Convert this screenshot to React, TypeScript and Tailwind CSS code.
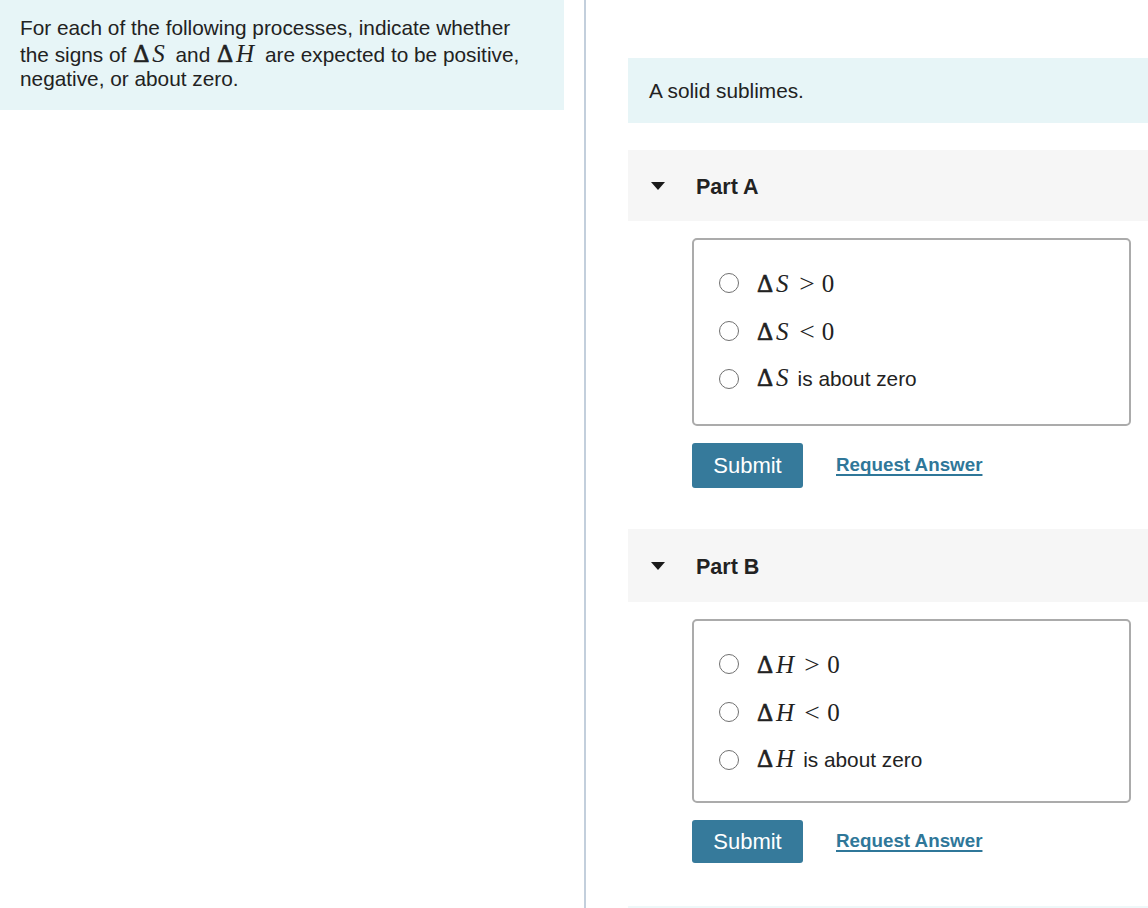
import { ReactNode } from "react"

const Delta = ({ v, size = "opt" }: { v: string; size?: "opt" | "inline" }) => (
    <span
        className={
            size === "opt"
                ? "font-['Liberation_Serif',serif] text-[25px] leading-none"
                : "font-['Liberation_Serif',serif] text-[25px] leading-none ml-[1px] mr-[5px]"
        }
    >
        <span className="[-webkit-text-stroke:0.6px_#222] mr-[3px]">Δ</span>
        <span className="italic">{v}</span>
    </span>
)

const Rel = ({ op, n }: { op: string; n: string }) => (
    <span className="font-['Liberation_Serif',serif] text-[25px] leading-none">
        <span className="inline-block ml-[11px] mr-[8px] scale-x-110">{op}</span>
        {n}
    </span>
)

const Option = ({ children }: { children: ReactNode }) => (
    <label className="flex items-center h-[48px] gap-[18px]">
        <span className="w-[20px] h-[20px] rounded-full border-[1.5px] border-[#707070] bg-white shrink-0" />
        <span className="flex items-baseline">{children}</span>
    </label>
)

type PartProps = {
    title: string
    options: ReactNode[]
    headerH: string
    boxPad: string
    btnH: string
}

const Part = ({ title, options, headerH, boxPad, btnH }: PartProps) => (
    <div className="flex flex-col">
        <div className={`${headerH} bg-[#f6f6f6] flex items-center pl-[22px]`}>
            <svg width="16" height="10" viewBox="0 0 16 10" className="mt-[1px]">
                <path d="M1 1 L15 1 L8 9 Z" fill="#1a1a1a" />
            </svg>
            <span className="ml-[30px] mt-[3px] text-[21.5px] font-bold text-[#222]">{title}</span>
        </div>
        <div className="pl-[64px] pr-[17px] pt-[17px]">
            <div className={`border-2 border-[#ababab] rounded-[5px] pl-[25px] ${boxPad}`}>
                {options.map((o, i) => (
                    <Option key={i}>{o}</Option>
                ))}
            </div>
            <div className="flex items-center mt-[17px] gap-[33px]">
                <button className={`${btnH} w-[111px] bg-[#367a9b] rounded-[3px] text-white text-[22px]`}>
                    Submit
                </button>
                <a href="#" className="text-[#2f7799] font-bold text-[18.8px] underline underline-offset-[3px] decoration-2">
                    Request Answer
                </a>
            </div>
        </div>
    </div>
)

const App = () => {
    return (
        <div className="flex min-h-[908px] bg-white font-['Liberation_Sans',Arial,sans-serif] text-[#222]">
            <div className="w-[584px] shrink-0">
                <div className="w-[564px] h-[110px] bg-[#e7f5f7] pl-[20px] pt-[16px] text-[20.8px] leading-[24.5px]">
                    <div>For each of the following processes, indicate whether</div>
                    <div className="whitespace-nowrap">
                        the signs of <Delta v="S" size="inline" /> and <Delta v="H" size="inline" /> are expected to be positive,
                    </div>
                    <div>negative, or about zero.</div>
                </div>
            </div>
            <div className="w-[2px] bg-[#c3cfdc] shrink-0" />
            <div className="flex-1 pl-[42px] pt-[58px]">
                <div className="h-[65px] bg-[#e7f5f7] flex items-center pl-[21px] text-[20.8px]">
                    A solid sublimes.
                </div>
                <div className="mt-[27px]">
                    <Part
                        title="Part A"
                        headerH="h-[71px]"
                        boxPad="pt-[19px] pb-[21px]"
                        btnH="h-[45px]"
                        options={[
                            <>
                                <Delta v="S" />
                                <Rel op=">" n="0" />
                            </>,
                            <>
                                <Delta v="S" />
                                <Rel op="<" n="0" />
                            </>,
                            <>
                                <Delta v="S" />
                                <span className="ml-[9px] text-[20.8px]">is about zero</span>
                            </>,
                        ]}
                    />
                </div>
                <div className="mt-[41px]">
                    <Part
                        title="Part B"
                        headerH="h-[73px]"
                        boxPad="pt-[19px] pb-[17px]"
                        btnH="h-[43px]"
                        options={[
                            <>
                                <Delta v="H" />
                                <Rel op=">" n="0" />
                            </>,
                            <>
                                <Delta v="H" />
                                <Rel op="<" n="0" />
                            </>,
                            <>
                                <Delta v="H" />
                                <span className="ml-[9px] text-[20.8px]">is about zero</span>
                            </>,
                        ]}
                    />
                </div>
                <div className="mt-[43px] h-[40px] bg-[#eef8f9]" />
            </div>
        </div>
    )
}

export default App
